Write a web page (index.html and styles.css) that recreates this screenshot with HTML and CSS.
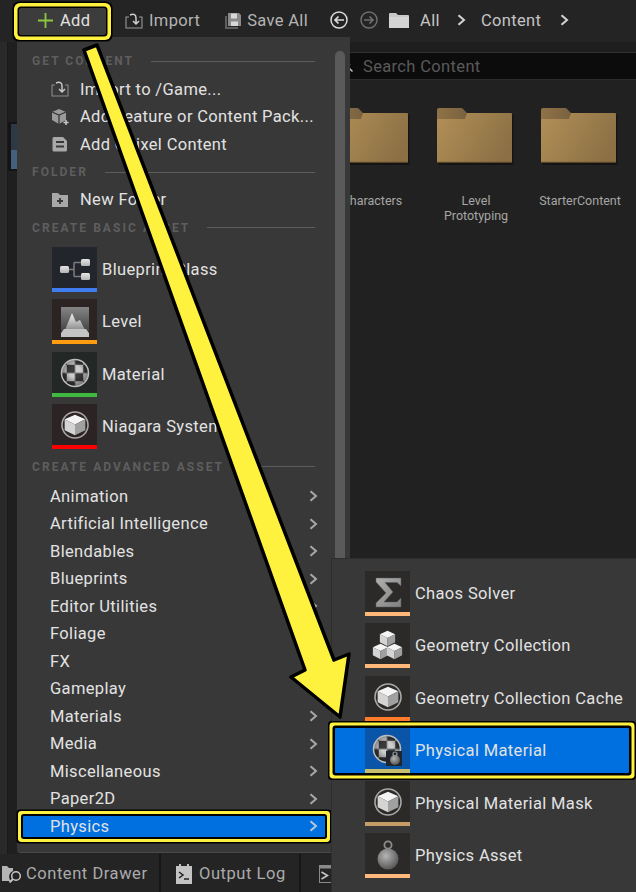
FILE: index.html
```html
<!DOCTYPE html>
<html lang="en">
<head>
<meta charset="utf-8">
<title>Content Browser - Add menu</title>
<link rel="stylesheet" href="styles.css">
</head>
<body>
<svg class="defs" width="0" height="0" aria-hidden="true">
  <defs>
    <linearGradient id="gFolder" x1="0" y1="0.2" x2="1" y2="0.6"><stop offset="0" stop-color="#b08d55"/><stop offset="1" stop-color="#8b7045"/></linearGradient>
    <linearGradient id="gTab" x1="0" y1="0" x2="1" y2="0"><stop offset="0" stop-color="#8f7247"/><stop offset="1" stop-color="#7a6240"/></linearGradient>
    <linearGradient id="gNode" x1="0" y1="0" x2="0" y2="1"><stop offset="0" stop-color="#e6e6e6"/><stop offset="1" stop-color="#b4b4b4"/></linearGradient>
    <linearGradient id="gPanel" x1="0" y1="0" x2="0" y2="1"><stop offset="0" stop-color="#858585"/><stop offset="1" stop-color="#444444"/></linearGradient>
    <linearGradient id="gMount" x1="0" y1="0" x2="0" y2="1"><stop offset="0" stop-color="#f2f2f2"/><stop offset="1" stop-color="#8c8c8c"/></linearGradient>
    <linearGradient id="gSigma" x1="0" y1="0" x2="1" y2="1"><stop offset="0" stop-color="#b0b0b0"/><stop offset="1" stop-color="#808080"/></linearGradient>
    <radialGradient id="gBall" cx="0.4" cy="0.35" r="0.75"><stop offset="0" stop-color="#b5b5b5"/><stop offset="1" stop-color="#4a4a4a"/></radialGradient>
    <radialGradient id="gShade" cx="0.5" cy="0.45" r="0.55"><stop offset="0.4" stop-color="#000" stop-opacity="0"/><stop offset="1" stop-color="#000" stop-opacity=".45"/></radialGradient>
    <pattern id="pCheck" patternUnits="userSpaceOnUse" x="14.750" y="12.750" width="16.500" height="16.500">
      <rect width="16.500" height="16.500" fill="#cdcdcd"/>
      <rect width="8.250" height="8.250" fill="#3a3a3a"/>
      <rect x="8.250" y="8.250" width="8.250" height="8.250" fill="#3a3a3a"/>
    </pattern>
    <clipPath id="cBall"><circle cx="23" cy="21" r="13"/></clipPath>

    <symbol id="cube" viewBox="0 0 20 20">
      <polygon points="10,1 19,5 10,9.500 1,5" fill="#f4f4f4"/>
      <polygon points="1,5 10,9.500 10,19 1,14.500" fill="#d4d4d4"/>
      <polygon points="19,5 10,9.500 10,19 19,14.500" fill="#a0a0a0"/>
    </symbol>
    <symbol id="tBlueprint" viewBox="0 0 45 41">
      <path d="M17 22.500h5M22 15.500v14M22 15.500h7M22 29.500h7" fill="none" stroke="#7c7c7c" stroke-width="1.500"/>
      <rect x="8" y="19" width="9" height="7" rx="1.500" fill="url(#gNode)"/>
      <rect x="29" y="12" width="9" height="7" rx="1.500" fill="url(#gNode)"/>
      <rect x="29" y="26" width="9" height="7" rx="1.500" fill="url(#gNode)"/>
    </symbol>
    <symbol id="tLevel" viewBox="0 0 45 41">
      <rect x="9" y="8" width="28" height="24" fill="url(#gPanel)"/>
      <polygon points="13,31 20,14 24,23 28,21 33,31" fill="url(#gMount)"/>
      <polygon points="9,38 9,34 12,30 34,30 37,34 37,38" fill="#c4c4c4"/>
    </symbol>
    <symbol id="tMaterial" viewBox="0 0 45 41">
      <g clip-path="url(#cBall)">
        <rect x="9" y="7" width="28" height="28" fill="url(#pCheck)"/>
        <circle cx="23" cy="21" r="13" fill="url(#gShade)"/>
      </g>
      <circle cx="23" cy="21" r="13.500" fill="none" stroke="#bcbcbc" stroke-width="1.500"/>
    </symbol>
    <symbol id="tSphereCube" viewBox="0 0 45 41">
      <circle cx="23" cy="21" r="13" fill="none" stroke="#a8a8a8" stroke-width="1.600"/>
      <use href="#cube" x="11.500" y="9.500" width="23" height="23"/>
    </symbol>
    <symbol id="tSigma" viewBox="0 0 45 41">
      <polygon points="11,7 36,7 36,15 32,11.500 20,11.500 28,21 19,31 32,31 36,27 36,36 11,36 11,32 21,22 11,11" fill="url(#gSigma)" stroke="#5a5a5a" stroke-width=".5"/>
    </symbol>
    <symbol id="tGeo" viewBox="0 0 45 41">
      <use href="#cube" x="14" y="7" width="17" height="17"/>
      <use href="#cube" x="7" y="20" width="17" height="17"/>
      <use href="#cube" x="21" y="20" width="17" height="17"/>
    </symbol>
    <symbol id="tPhysMat" viewBox="0 0 45 41">
      <use href="#tMaterial" x="-1" y="0" width="45" height="41"/>
      <rect x="21" y="23" width="16" height="15" fill="#20262e"/>
      <circle cx="30" cy="32" r="5" fill="url(#gBall)"/>
      <circle cx="30" cy="26" r="2" fill="none" stroke="#9a9a9a" stroke-width="1.200"/>
    </symbol>
    <symbol id="tBall" viewBox="0 0 45 41">
      <circle cx="23" cy="12" r="3.600" fill="none" stroke="#8c8c8c" stroke-width="1.800"/>
      <circle cx="23" cy="26" r="10.500" fill="url(#gBall)"/>
    </symbol>
    <symbol id="folder" viewBox="0 0 80 60">
      <rect x="2.500" y="8" width="75" height="50" fill="#141414"/>
      <path d="M1 6H75a1 1 0 0 1 1 1V56H1Z" fill="url(#gFolder)"/>
      <path d="M1 3a2 2 0 0 1 2-2h23l5 5-2 6H1Z" fill="url(#gTab)"/>
      <rect x="1" y="54.800" width="75" height="1.200" fill="#5a4526"/>
    </symbol>
  </defs>
</svg>

<div class="app">
  <header class="toolbar">
    <button class="add"><svg class="i-plus" viewBox="0 0 16 16"><path d="M8 0v16M0 8h16" stroke="#8cc63f" stroke-width="2" fill="none"/></svg><span>Add</span></button>
    <span class="tool tool-import"><svg class="ico18" viewBox="0 0 18 18"><path d="M4 5H1v11h16V5h-3" fill="none" stroke="#9a9a9a" stroke-width="1.100"/><path d="M5 3c4-2 6 0 6 3v5M8 9l3 3 3-3" fill="none" stroke="#d0d0d0" stroke-width="1.500"/></svg>Import</span>
    <span class="tool tool-save"><svg class="ico18" viewBox="0 0 18 18"><path d="M4 1h11l2 2v11H4Z" fill="#8a8a8a"/><path d="M1 4h2v11h11v2H1Z" fill="#5e5e5e"/><rect x="7" y="1.500" width="6" height="5" fill="#d8d8d8"/><rect x="7" y="9.500" width="7" height="4.500" fill="#d8d8d8"/></svg>Save All</span>
    <svg class="nav nav-back" viewBox="0 0 18 18"><circle cx="9" cy="9" r="8" fill="none" stroke="#dcdcdc" stroke-width="1.500"/><path d="M14 9H5M8.500 5.500 5 9l3.500 3.500" fill="none" stroke="#dcdcdc" stroke-width="1.700"/></svg>
    <svg class="nav nav-fwd" viewBox="0 0 18 18"><circle cx="9" cy="9" r="8" fill="none" stroke="#6e6e6e" stroke-width="1.500"/><path d="M4 9h9M9.500 5.500 13 9l-3.500 3.500" fill="none" stroke="#6e6e6e" stroke-width="1.700"/></svg>
    <svg class="crumb-folder" viewBox="0 0 20 16"><path d="M0 2a1 1 0 0 1 1-1h6l2 2h10a1 1 0 0 1 1 1v12H0Z" fill="#c8c8c8"/><rect y="5" width="20" height="11" fill="#d4d4d4"/></svg>
    <span class="crumb crumb-all">All</span>
    <svg class="crumb-sep" viewBox="0 0 9 12"><path d="M1.500 1.200 7 6l-5.500 4.800" fill="none" stroke="#d4d4d4" stroke-width="2"/></svg>
    <span class="crumb crumb-content">Content</span>
    <svg class="crumb-sep crumb-sep-last" viewBox="0 0 9 12"><path d="M1.500 1.200 7 6l-5.500 4.800" fill="none" stroke="#d4d4d4" stroke-width="2"/></svg>
  </header>

  <main class="main">
    <aside class="side">
      <div class="side-line"></div>
      <div class="side-dark"><div class="side-sel"><div class="side-sel-top"></div><div class="side-sel-bot"></div></div></div>
    </aside>
    <section class="browser">
      <div class="strip"></div>
      <div class="search">
        <svg class="search-ico" viewBox="0 0 14 14"><circle cx="5.500" cy="5.500" r="4" fill="none" stroke="#c8c8c8" stroke-width="1.500"/><path d="m8.500 8.500 4 4" stroke="#c8c8c8" stroke-width="1.500"/></svg>
        <span class="search-text">Search Content</span>
      </div>
      <div class="tiles">
        <figure class="tile"><svg class="folder" viewBox="0 0 80 60"><use href="#folder"/></svg><figcaption>Characters</figcaption></figure>
        <figure class="tile"><svg class="folder" viewBox="0 0 80 60"><use href="#folder"/></svg><figcaption>Level<br>Prototyping</figcaption></figure>
        <figure class="tile"><svg class="folder" viewBox="0 0 80 60"><use href="#folder"/></svg><figcaption>StarterContent</figcaption></figure>
      </div>
    </section>
  </main>

  <footer class="status">
    <span class="st st-drawer"><svg class="st-ico-drawer" viewBox="0 0 20 18"><path d="M0 1h5l2 2h4v3a6 6 0 0 0-2 10H0Z" fill="#b4b4b4"/><circle cx="14" cy="11" r="4.300" fill="none" stroke="#c8c8c8" stroke-width="1.500"/><path d="m11 14-3.500 3.500" stroke="#c8c8c8" stroke-width="1.800"/></svg>Content Drawer</span>
    <span class="st st-log"><svg class="st-ico-log" viewBox="0 0 16 20"><path d="M0 2h3V0h2v2h6V0h2v2h3v18H0Z" fill="#c4c4c4"/><path d="m3 8 4 3-4 3" fill="none" stroke="#222" stroke-width="1.500"/><path d="M8 15h5" stroke="#222" stroke-width="1.500"/></svg>Output Log</span>
    <span class="st st-cmd"><svg class="st-ico-cmd" viewBox="0 0 14 18"><rect x=".5" y=".5" width="13" height="17" fill="none" stroke="#8a8a8a"/><rect width="14" height="3.500" fill="#8a8a8a"/><path d="m2.500 7 6 3.500-6 3.500" fill="none" stroke="#c8c8c8" stroke-width="1.500"/></svg></span>
  </footer>

  <nav class="menu">
    <div class="menu-body">
      <div class="hdr"><span>GET CONTENT</span><i></i></div>
      <div class="mi mi-first"><svg class="ico-sm" viewBox="0 0 18 18"><path d="M4 5H1v11h16V5h-3" fill="none" stroke="#8a8a8a" stroke-width="1.100"/><path d="M5 3c4-2 6 0 6 3v5M8 9l3 3 3-3" fill="none" stroke="#c8c8c8" stroke-width="1.500"/></svg>Import to /Game...</div>
      <div class="mi"><svg class="ico-sm" viewBox="0 0 18 18"><path d="M8 1l7 3v8l-7 4-7-4V4Z" fill="#9a9a9a"/><path d="M1 4l7 3 7-3M8 7v9" stroke="#383838" stroke-width="1.300" fill="none"/><path d="M15 12v5M12.500 14.500h5" stroke="#c8c8c8" stroke-width="1.500"/></svg>Add Feature or Content Pack...</div>
      <div class="mi"><svg class="ico-sm" viewBox="0 0 18 18"><path d="M3 2h9l4 4v9a1.500 1.500 0 0 1-1.500 1.500H3A1.500 1.500 0 0 1 1.500 15V3.500A1.500 1.500 0 0 1 3 2Z" fill="#a8a8a8"/><path d="M5 7h8M5 11.500h8" stroke="#383838" stroke-width="2"/></svg>Add Quixel Content</div>
      <div class="hdr"><span>FOLDER</span><i></i></div>
      <div class="mi"><svg class="ico-sm" viewBox="0 0 18 18"><path d="M1 2h6l2 2h8v12H1Z" fill="#a8a8a8"/><path d="M9 7v6M6 10h6" stroke="#383838" stroke-width="1.800"/></svg>New Folder</div>
      <div class="hdr"><span>CREATE BASIC ASSET</span><i></i></div>
      <div class="thumbs">
        <div class="ti"><div class="thumb th-bp"><svg viewBox="0 0 45 41"><use href="#tBlueprint"/></svg></div>Blueprint Class</div>
        <div class="ti"><div class="thumb th-lv"><svg viewBox="0 0 45 41"><use href="#tLevel"/></svg></div>Level</div>
        <div class="ti"><div class="thumb th-mt"><svg viewBox="0 0 45 41"><use href="#tMaterial"/></svg></div>Material</div>
        <div class="ti"><div class="thumb th-ng"><svg viewBox="0 0 45 41"><use href="#tSphereCube"/></svg></div>Niagara System</div>
      </div>
      <div class="hdr hdr-adv"><span>CREATE ADVANCED ASSET</span><i></i></div>
      <div class="list">
        <div class="li">Animation<svg class="chev" viewBox="0 0 9 12"><path d="M1.500 1.200 7 6l-5.500 4.800" /></svg></div>
        <div class="li">Artificial Intelligence<svg class="chev" viewBox="0 0 9 12"><path d="M1.500 1.200 7 6l-5.500 4.800" /></svg></div>
        <div class="li">Blendables<svg class="chev" viewBox="0 0 9 12"><path d="M1.500 1.200 7 6l-5.500 4.800" /></svg></div>
        <div class="li">Blueprints<svg class="chev" viewBox="0 0 9 12"><path d="M1.500 1.200 7 6l-5.500 4.800" /></svg></div>
        <div class="li">Editor Utilities<svg class="chev" viewBox="0 0 9 12"><path d="M1.500 1.200 7 6l-5.500 4.800" /></svg></div>
        <div class="li">Foliage<svg class="chev" viewBox="0 0 9 12"><path d="M1.500 1.200 7 6l-5.500 4.800" /></svg></div>
        <div class="li">FX<svg class="chev" viewBox="0 0 9 12"><path d="M1.500 1.200 7 6l-5.500 4.800" /></svg></div>
        <div class="li">Gameplay<svg class="chev" viewBox="0 0 9 12"><path d="M1.500 1.200 7 6l-5.500 4.800" /></svg></div>
        <div class="li">Materials<svg class="chev" viewBox="0 0 9 12"><path d="M1.500 1.200 7 6l-5.500 4.800" /></svg></div>
        <div class="li">Media<svg class="chev" viewBox="0 0 9 12"><path d="M1.500 1.200 7 6l-5.500 4.800" /></svg></div>
        <div class="li">Miscellaneous<svg class="chev" viewBox="0 0 9 12"><path d="M1.500 1.200 7 6l-5.500 4.800" /></svg></div>
        <div class="li">Paper2D<svg class="chev" viewBox="0 0 9 12"><path d="M1.500 1.200 7 6l-5.500 4.800" /></svg></div>
        <div class="li li-active">Physics<svg class="chev" viewBox="0 0 9 12"><path d="M1.500 1.200 7 6l-5.500 4.800" /></svg></div>
      </div>
    </div>
    <div class="scroll"></div>
  </nav>

  <nav class="submenu">
    <div class="ti sub"><div class="thumb th-ch"><svg viewBox="0 0 45 41"><use href="#tSigma"/></svg></div>Chaos Solver</div>
    <div class="ti sub"><div class="thumb th-ge"><svg viewBox="0 0 45 41"><use href="#tGeo"/></svg></div>Geometry Collection</div>
    <div class="ti sub"><div class="thumb th-gc"><svg viewBox="0 0 45 41"><use href="#tSphereCube"/></svg></div>Geometry Collection Cache</div>
    <div class="ti sub sub-active"><div class="thumb th-pm"><svg viewBox="0 0 45 41"><use href="#tPhysMat"/></svg></div>Physical Material</div>
    <div class="ti sub"><div class="thumb th-pk"><svg viewBox="0 0 45 41"><use href="#tSphereCube"/></svg></div>Physical Material Mask</div>
    <div class="ti sub"><div class="thumb th-pa"><svg viewBox="0 0 45 41"><use href="#tBall"/></svg></div>Physics Asset</div>
  </nav>

  <svg class="arrow" viewBox="0 0 636 892" aria-hidden="true">
    <polygon points="84,50 97,45 334,660 349,654 340,717 291,677 305,670" fill="#fff23f" stroke="#000" stroke-width="3.500" stroke-linejoin="round"/>
  </svg>
</div>
</body>
</html>
```

FILE: styles.css
```css
* { box-sizing: border-box; }
html, body { margin: 0; padding: 0; }
body {
  width: 636px;
  height: 892px;
  overflow: hidden;
  background: #212121;
  font-family: Roboto, "Liberation Sans", sans-serif;
  font-size: 16.5px;
  letter-spacing: .35px;
  color: #e2e2e2;
}
.defs { position: absolute; }
.app {
  position: relative;
  width: 636px;
  height: 892px;
  display: flex;
  flex-direction: column;
  overflow: hidden;
}

/* toolbar */
.toolbar {
  height: 42px;
  flex: none;
  background: #242424;
  display: flex;
  align-items: flex-start;
  padding: 0 0 0 19px;
  color: #b4b4b4;
  line-height: 41px;
}
.add {
  position: relative;
  z-index: 3;
  width: 87px;
  height: 27px;
  margin-top: 8px;
  padding: 0 0 2px 19px;
  display: flex;
  align-items: center;
  gap: 7px;
  border: 0;
  border-radius: 2px;
  background: #3c3c3c;
  color: #e2e2e2;
  font: inherit;
  line-height: 20px;
  letter-spacing: .35px;
  box-shadow: 0 0 0 1.5px #000, 0 0 0 5px #fff23f, 0 0 0 6.5px #000;
}
.i-plus { width: 15px; height: 15px; flex: none; }
.tool { display: flex; align-items: center; gap: 6px; height: 41px; }
.tool-import { margin-left: 19px; }
.tool-save { margin-left: 24px; gap: 5px; }
.ico18 { width: 18px; height: 18px; flex: none; }
.nav { width: 18px; height: 18px; flex: none; margin-top: 11px; }
.nav-back { margin-left: 22px; }
.nav-fwd { margin-left: 12px; }
.crumb-folder { width: 20px; height: 16px; flex: none; margin: 12px 0 0 11px; }
.crumb { color: #c4c4c4; }
.crumb-all { margin-left: 11px; }
.crumb-sep { width: 9px; height: 12px; flex: none; margin: 14px 0 0 17px; }
.crumb-sep-last { margin-left: 19px; }
.crumb-content { margin-left: 15px; }

/* main */
.main { flex: 1; display: flex; min-height: 0; }
.side {
  width: 17px;
  flex: none;
  display: flex;
  background: #2a2a2a;
}
.side-line { width: 8px; border-right: 1px solid #1a1a1a; }
.side-dark { flex: 1; background: #1f1f1f; padding-top: 80px; }
.side-sel { height: 49px; padding: 2px 0 0 3px; background: #141414; }
.side-sel-top { height: 26px; background: #2e3947; }
.side-sel-bot { height: 19px; background: #43607f; }
.browser { flex: 1; display: flex; flex-direction: column; min-width: 0; background: #212121; }
.strip { height: 11px; background: #1e1e1e; border-bottom: 1px solid #303030; flex: none; }
.search {
  height: 27px;
  flex: none;
  background: #0c0c0c;
  border-bottom: 1px solid #2c2c2c;
  display: flex;
  align-items: center;
  padding-left: 323px;
  color: #5a5a5a;
}
.search-ico { width: 14px; height: 14px; flex: none; margin-right: 9px; }
.search-text { display: block; }
.tiles {
  display: flex;
  justify-content: flex-end;
  padding: 27px 4px 0 0;
}
.tile { margin: 0; width: 104px; text-align: center; color: #a6a6a6; font-size: 12.5px; line-height: 15px; letter-spacing: 0; }
.folder { display: block; width: 80px; height: 60px; margin: 0 auto 26px; }

/* status bar */
.status {
  height: 38px;
  flex: none;
  background: #242424;
  display: flex;
  align-items: center;
  color: #ababab;
  letter-spacing: .55px;
}
.st { display: flex; align-items: center; height: 100%; border-right: 2px solid #161616; padding-top: 1px; }
.st-drawer { width: 161px; padding-left: 2px; gap: 4px; }
.st-ico-drawer { width: 20px; height: 18px; flex: none; }
.st-log { width: 140px; padding-left: 15px; gap: 7px; }
.st-ico-log { width: 16px; height: 20px; flex: none; }
.st-cmd { padding-left: 18px; border: 0; }
.st-ico-cmd { width: 14px; height: 18px; }

/* main menu */
.menu {
  position: absolute;
  z-index: 1;
  left: 17px;
  top: 37px;
  width: 333px;
  height: 816px;
  display: flex;
  background: #383838;
  border-bottom: 1px solid #4a4a4a;
  border-radius: 0 0 0 4px;
}
.menu-body { width: 318px; flex: none; padding-top: 10px; }
.scroll { width: 10px; margin: 14px 0 0; background: #5a5a5a; border-radius: 5px 5px 0 0; }
.hdr {
  height: 28px;
  display: flex;
  align-items: center;
  gap: 17px;
  padding: 0 20px 0 15px;
  font-size: 12px;
  font-weight: 700;
  letter-spacing: 2.05px;
  color: #5e5e5e;
}
.hdr span { white-space: nowrap; }
.hdr i { flex: 1; height: 1px; background: #5c5c5c; }
.hdr-adv { margin-top: -4.4px; }
.mi {
  height: 27.5px;
  display: flex;
  align-items: center;
  padding-left: 34px;
  white-space: nowrap;
}
.mi-first { margin-top: .5px; }
.ico-sm { width: 18px; height: 18px; flex: none; margin-right: 11px; }
.thumbs { margin-top: 5.4px; }
.ti { display: flex; align-items: center; gap: 5px; height: 45px; white-space: nowrap; }
.thumbs .ti { padding-left: 35px; margin-bottom: 7.5px; }
.thumb { width: 45px; height: 45px; flex: none; border-bottom: 4px solid; }
.thumb svg { display: block; width: 45px; height: 41px; }
.th-bp { background: #22252c; border-color: #3f7df0; }
.th-lv { background: #2b2422; border-color: #ff9c0f; }
.th-mt { background: #232826; border-color: #3eb83e; }
.th-ng { background: #2c2324; border-color: #ff0000; }
.list { margin-top: 1.75px; }
.li {
  height: 27.5px;
  margin: 0 10px 0 6px;
  padding: 0 7px 0 27px;
  display: flex;
  align-items: center;
  justify-content: space-between;
}
.chev { width: 9px; height: 12px; flex: none; }
.chev path { fill: none; stroke: #a8a8a8; stroke-width: 2; }
.li-active {
  height: 21px;
  margin-top: 3.25px;
  margin-bottom: 3.25px;
  background: #0070e0;
  border-radius: 1px;
  box-shadow: 0 0 0 2px #000, 0 0 0 5px #fff23f, 0 0 0 6.5px #000;
}
.li-active .chev path { stroke: #b4c8dc; }

/* submenu */
.submenu {
  position: absolute;
  z-index: 2;
  left: 331px;
  top: 558px;
  width: 305px;
  height: 334px;
  background: #383838;
  border-left: 1px solid #2e2e2e;
  border-top: 1px solid #2e2e2e;
  padding-top: 11.7px;
}
.sub { padding-left: 33px; margin-bottom: 7.5px; }
.sub-active {
  margin: 0 7px 7.5px 3px;
  padding-left: 30px;
  background: #0070e0;
  border-radius: 1px;
  box-shadow: 0 0 0 2.5px #000, 0 0 0 5.5px #fff23f, 0 0 0 7px #000;
}
.th-ch, .th-ge { background: #2c2a28; border-color: #ffb877; }
.th-gc { background: #2c2a28; border-color: #ff7c2a; }
.th-pm { background: #0a55a8; border-color: #c8bd6e; }
.th-pk { background: #2c2a28; border-color: #c49e66; }
.th-pa { background: #2c2a28; border-color: #ffb87c; }

/* annotation */
.arrow {
  position: absolute;
  z-index: 5;
  inset: 0;
  width: 636px;
  height: 892px;
  pointer-events: none;
}
```
